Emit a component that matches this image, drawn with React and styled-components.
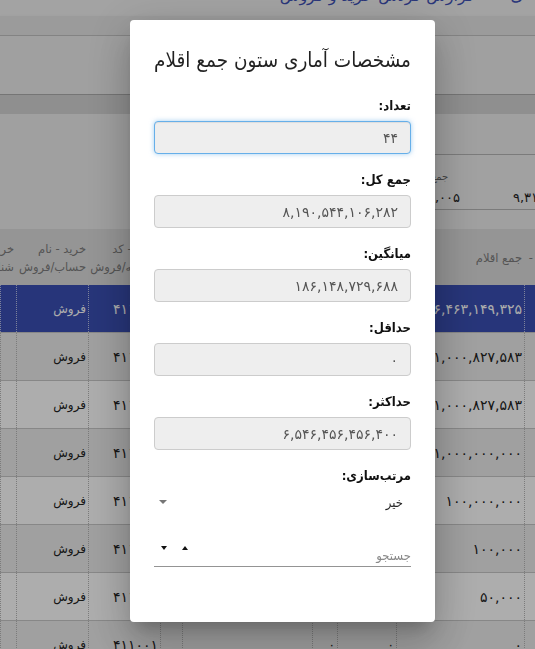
import React from 'react';
import styled, { createGlobalStyle, css } from 'styled-components';

const GlobalStyle = createGlobalStyle`
  html, body { margin: 0; padding: 0; }
  body {
    font-family: "DejaVu Sans", "Noto Sans", sans-serif;
    background: #ececec;
    overflow: hidden;
  }
  * { box-sizing: border-box; }
`;

const Page = styled.div`
  direction: rtl;
  width: 535px;
  height: 649px;
  overflow: hidden;
  background: #ececec;
  font-size: 13px;
  color: #222;
`;

const TopBar = styled.div`
  height: 16px;
  background: #f0f0f0;
  overflow: hidden;
  display: flex;
  align-items: flex-start;
  padding-right: 12px;
  gap: 36px;
`;

const TopTitle = styled.div`
  margin-top: -14px;
  color: #3f51b5;
  font-size: 16px;
  line-height: 20px;
  white-space: nowrap;
`;

const SubBar = styled.div`
  height: 20px;
  background: #e5e5e5;
  border-bottom: 1px solid #c2c2c2;
  box-shadow: 0 2px 4px rgba(0, 0, 0, 0.12);
`;

const Section = styled.div`
  height: 58px;
  background: #ececec;
`;

const TabStrip = styled.div`
  height: 20px;
  background: #d3d3d3;
  border-top: 1px solid #adadad;
`;

const FilterArea = styled.div`
  height: 115px;
  background: #ececec;
  padding-top: 40px;
  display: flex;
`;

const SummaryCard = styled.div`
  width: 330px;
  height: 56px;
  border-top: 1px solid #b6b6b6;
  border-bottom: 1px solid #b6b6b6;
  background: #eeeeee;
  display: flex;
  overflow: hidden;
`;

const SummaryItem = styled.div`
  flex: 0 0 ${p => p.$w}px;
  padding-top: 15px;
  overflow: hidden;
  text-align: ${p => (p.$edge ? 'left' : 'center')};
  ${p => p.$edge && css`direction: ltr; padding-left: 48px;`}
`;

const SummaryLabel = styled.div`
  font-size: 10px;
  line-height: 14px;
  height: 14px;
  color: #666;
  white-space: nowrap;
`;

const SummaryValue = styled.div`
  margin-top: 5px;
  font-size: 13px;
  line-height: 18px;
  letter-spacing: 0.8px;
  color: #222;
  white-space: nowrap;
`;

const COLS = '11px 128px 59px 25px 130px 22px 72px 72px 16px';

const HeaderRow = styled.div`
  display: grid;
  grid-template-columns: ${COLS};
  height: 56px;
  background: #dcdcdc;
`;

const HeadCell = styled.div`
  display: flex;
  align-items: center;
  padding-right: 2px;
  overflow: hidden;
  font-size: 11.5px;
  line-height: 18px;
  color: #7c7c7c;
  white-space: nowrap;
`;

const HeadText = styled.div`
  text-align: right;
  padding-top: 2px;
`;

const Row = styled.div`
  display: grid;
  grid-template-columns: ${COLS};
  height: 48px;
  border-bottom: 1px solid #c8c8c8;
  background: ${p => (p.$selected ? '#3a4fb4' : p.$odd ? '#ffffff' : '#ececec')};
  color: ${p => (p.$selected ? '#ffffff' : '#222')};
`;

const Cell = styled.div`
  display: flex;
  align-items: center;
  justify-content: flex-start;
  padding-right: 2px;
  overflow: hidden;
  white-space: nowrap;
  font-size: 12px;
  border-left: 1px dotted ${p => (p.$selected ? 'rgba(255,255,255,0.65)' : '#b5b5b5')};
  ${p => p.$num && css`font-size: 14px; letter-spacing: 1.7px;`}
`;

const Overlay = styled.div`
  position: fixed;
  inset: 0;
  background: rgba(0, 0, 0, 0.32);
  display: flex;
  align-items: flex-start;
  justify-content: flex-start;
  direction: ltr;
  padding: 20px 0 0 130px;
`;

const Dialog = styled.div`
  direction: rtl;
  width: 305px;
  background: #fff;
  border-radius: 4px;
  padding: 24px 24px 55px;
  box-shadow: 0 11px 15px -7px rgba(0, 0, 0, 0.2), 0 24px 38px 3px rgba(0, 0, 0, 0.14),
    0 9px 46px 8px rgba(0, 0, 0, 0.12);
  font-family: "DejaVu Sans Condensed", "DejaVu Sans", sans-serif;
`;

const Title = styled.h2`
  margin: 0 0 20px;
  font-size: 20.5px;
  font-weight: 400;
  line-height: 32px;
  color: rgba(0, 0, 0, 0.87);
  white-space: nowrap;
`;

const Group = styled.div`
  margin-bottom: 16px;
`;

const Label = styled.label`
  display: block;
  font-weight: 700;
  font-size: 13px;
  line-height: 20px;
  margin-bottom: 5px;
  color: #111;
`;

const Field = styled.input`
  display: block;
  width: 100%;
  height: 33px;
  padding: 6px 12px;
  font-family: "DejaVu Sans", sans-serif;
  font-size: 14px;
  letter-spacing: 0.6px;
  color: #555;
  background: #eeeeee;
  border: 1px solid #cccccc;
  border-radius: 4px;
  text-align: right;
  direction: rtl;
  outline: none;
  ${p =>
    p.$focused &&
    css`
      border-color: #66afe9;
      box-shadow: inset 0 1px 1px rgba(0, 0, 0, 0.075), 0 0 5px rgba(102, 175, 233, 0.6);
    `}
`;

const Select = styled.div`
  display: flex;
  align-items: center;
  height: 22px;
  padding-right: 8px;
  font-size: 13px;
  color: rgba(0, 0, 0, 0.87);
`;

const SelectValue = styled.span`
  flex: 1;
`;

const Caret = styled.span`
  width: 0;
  height: 0;
  border-left: 4px solid transparent;
  border-right: 4px solid transparent;
  border-top: 4px solid #767676;
  margin-left: 5px;
`;

const Search = styled.div`
  display: flex;
  align-items: flex-start;
  margin-top: 31px;
  height: 23px;
  border-bottom: 1px solid rgba(0, 0, 0, 0.42);
`;

const SearchInput = styled.input`
  flex: 1;
  min-width: 0;
  height: 22px;
  padding: 0;
  border: 0;
  outline: 0;
  background: transparent;
  font-family: inherit;
  font-size: 13px;
  text-align: right;
  direction: rtl;
  &::placeholder {
    color: #8a8a8a;
  }
`;

const Sorts = styled.div`
  display: flex;
  gap: 15px;
  margin: 2px 0 0 7px;
`;

const Arrow = styled.span`
  width: 0;
  height: 0;
  border-left: 3.5px solid transparent;
  border-right: 3.5px solid transparent;
  ${p => (p.$up ? 'border-bottom: 4px solid #111;' : 'border-top: 4px solid #111;')}
`;

const rows = [
  { amount: '۶,۴۶۳,۱۴۹,۳۲۵', selected: true },
  { amount: '۱,۰۰۰,۸۲۷,۵۸۳' },
  { amount: '۱,۰۰۰,۸۲۷,۵۸۳' },
  { amount: '۱,۰۰۰,۰۰۰,۰۰۰' },
  { amount: '۱۰۰,۰۰۰,۰۰۰' },
  { amount: '۱۰۰,۰۰۰' },
  { amount: '۵۰,۰۰۰' },
  { amount: '۰', last: true },
];

const stats = [
  { label: 'تعداد:', value: '۴۴', focused: true },
  { label: 'جمع کل:', value: '۸,۱۹۰,۵۴۴,۱۰۶,۲۸۲' },
  { label: 'میانگین:', value: '۱۸۶,۱۴۸,۷۲۹,۶۸۸' },
  { label: 'حداقل:', value: '۰' },
  { label: 'حداکثر:', value: '۶,۵۴۶,۴۵۶,۴۵۶,۴۰۰' },
];

export default function App() {
  return (
    <>
      <GlobalStyle />
      <Page>
        <TopBar>
          <TopTitle>ی</TopTitle>
          <TopTitle>گزارش گردش خرید و فروش</TopTitle>
        </TopBar>
        <SubBar />
        <Section />
        <TabStrip />
        <FilterArea>
          <SummaryCard>
            <SummaryItem $w={70} $edge>
              <SummaryLabel />
              <SummaryValue>۹,۳۱۲,۶۵۰,۴۰۰</SummaryValue>
            </SummaryItem>
            <SummaryItem $w={74}>
              <SummaryLabel>جمع تعداد</SummaryLabel>
              <SummaryValue>۱۲,۴۰۰,۰۰۵</SummaryValue>
            </SummaryItem>
          </SummaryCard>
        </FilterArea>
        <HeaderRow>
          <HeadCell><HeadText>-</HeadText></HeadCell>
          <HeadCell><HeadText>جمع اقلام</HeadText></HeadCell>
          <HeadCell><HeadText>تخفیف</HeadText></HeadCell>
          <HeadCell><HeadText>واحد</HeadText></HeadCell>
          <HeadCell><HeadText>شرح</HeadText></HeadCell>
          <HeadCell><HeadText>نوع</HeadText></HeadCell>
          <HeadCell><HeadText>خرید - کد<br />شناسه/فروش</HeadText></HeadCell>
          <HeadCell><HeadText>خرید - نام<br />حساب/فروش</HeadText></HeadCell>
          <HeadCell><HeadText>خرید - شناسه<br />شناسه حساب</HeadText></HeadCell>
        </HeaderRow>
        {rows.map((r, i) => (
          <Row key={i} $selected={r.selected} $odd={i % 2 === 0}>
            <Cell $selected={r.selected} />
            <Cell $selected={r.selected} $num>{r.amount}</Cell>
            <Cell $selected={r.selected}>{r.last ? '۰' : ''}</Cell>
            <Cell $selected={r.selected}>{r.last ? '۰' : ''}</Cell>
            <Cell $selected={r.selected} />
            <Cell $selected={r.selected} />
            <Cell $selected={r.selected} $num>۴۱۱۰۰۱</Cell>
            <Cell $selected={r.selected}>فروش</Cell>
            <Cell $selected={r.selected} />
          </Row>
        ))}
      </Page>
      <Overlay>
        <Dialog>
          <Title>مشخصات آماری ستون جمع اقلام</Title>
          {stats.map(s => (
            <Group key={s.label}>
              <Label>{s.label}</Label>
              <Field readOnly value={s.value} $focused={s.focused} />
            </Group>
          ))}
          <Label>مرتب‌سازی:</Label>
          <Select>
            <SelectValue>خیر</SelectValue>
            <Caret />
          </Select>
          <Search>
            <SearchInput placeholder="جستجو" />
            <Sorts>
              <Arrow $up />
              <Arrow />
            </Sorts>
          </Search>
        </Dialog>
      </Overlay>
    </>
  );
}
